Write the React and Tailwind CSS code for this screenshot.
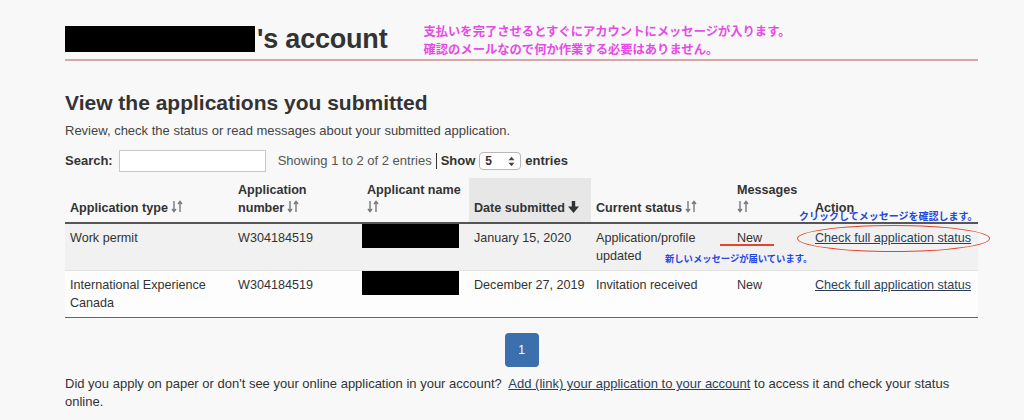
import React from 'react';

const SortIcon = () => (
  <svg width="12" height="13" viewBox="0 0 12 13" className="inline-block align-[-1px] ml-[3px]" fill="none" stroke="#7a7a7a" strokeWidth="1.4">
    <path d="M3 1v10.5M1 9l2 2.6L5 9" />
    <path d="M9 12V1.5M7 4l2-2.6L11 4" />
  </svg>
);

const DownArrow = () => (
  <svg width="11" height="12" viewBox="0 0 11 12" className="inline-block align-[-1px] ml-[3px]" fill="#333">
    <rect x="3.8" y="0" width="3.4" height="6.5" />
    <path d="M0 5.5h11L5.5 12z" />
  </svg>
);

const rows = [
  {
    type: 'Work permit',
    number: 'W304184519',
    date: 'January 15, 2020',
    status: 'Application/profile updated',
    messages: 'New',
    bg: 'bg-[#f1f1f1]',
  },
  {
    type: 'International Experience Canada',
    number: 'W304184519',
    date: 'December 27, 2019',
    status: 'Invitation received',
    messages: 'New',
    bg: 'bg-[#fdfdfd]',
  },
];

export default function App() {
  return (
    <div
      className="w-[1024px] h-[420px] overflow-hidden bg-[#f8f8f8] text-[#333]"
      style={{ fontFamily: '"Liberation Sans", Arial, sans-serif' }}
    >
      <div className="ml-[65px] w-[913px] relative">
        {/* page title */}
        <div className="h-[61px] border-b-[2px] border-[#d6a9a9] flex items-start pt-[26px]">
          <div className="w-[190px] h-[26px] bg-black" />
          <h1 className="ml-[2px] -mt-[2px] text-[27px] leading-[30px] font-bold tracking-[-0.2px]">'s account</h1>
          <div
            className="ml-[36px] -mt-[4px] text-[12.3px] leading-[18px] font-bold text-[#e64be6]"
            style={{ fontFamily: '"Noto Sans CJK JP", sans-serif' }}
          >
            <div>支払いを完了させるとすぐにアカウントにメッセージが入ります。</div>
            <div>確認のメールなので何か作業する必要はありません。</div>
          </div>
        </div>

        <h2 className="mt-[30px] text-[21px] leading-[24px] font-bold">View the applications you submitted</h2>
        <p className="mt-[7px] text-[13px] leading-[18px] text-[#444]">
          Review, check the status or read messages about your submitted application.
        </p>

        {/* search + entries */}
        <div className="mt-[10px] flex items-center h-[22px] text-[13px]">
          <span className="font-bold">Search:</span>
          <div className="ml-[6px] w-[147px] h-[22px] bg-white border border-[#c8c8c8]" />
          <span className="ml-[12px] text-[#555]">Showing 1 to 2 of 2 entries</span>
          <span className="ml-[4px] w-[1px] h-[16px] bg-[#333]" />
          <span className="ml-[4px] font-bold">Show</span>
          <div className="ml-[4px] w-[42px] h-[18px] rounded-[4px] border border-[#b8b8b8] bg-white flex items-center justify-between px-[5px]">
            <span className="font-bold text-[12px]">5</span>
            <svg width="7" height="11" viewBox="0 0 7 11" fill="#444">
              <path d="M0.5 4.3L3.5 0.8 6.5 4.3z" />
              <path d="M0.5 6.7L3.5 10.2 6.5 6.7z" />
            </svg>
          </div>
          <span className="ml-[4px] font-bold">entries</span>
        </div>

        {/* table */}
        <table className="mt-[6px] w-[913px] table-fixed border-collapse text-[12.6px] leading-[18px]">
          <colgroup>
            <col className="w-[168px]" />
            <col className="w-[129px]" />
            <col className="w-[107px]" />
            <col className="w-[122px]" />
            <col className="w-[141px]" />
            <col className="w-[78px]" />
            <col className="w-[168px]" />
          </colgroup>
          <thead>
            <tr className="border-b-[2px] border-[#555] h-[45px]">
              <th className="align-bottom text-left font-bold px-[5px] pb-[5px]">Application type<SortIcon /></th>
              <th className="align-bottom text-left font-bold px-[5px] pb-[5px]">Application<br />number<SortIcon /></th>
              <th className="align-bottom text-left font-bold px-[5px] pb-[5px]">Applicant name<br /><span className="-ml-[3px]"><SortIcon /></span></th>
              <th className="align-bottom text-left font-bold px-[5px] pb-[5px] bg-[#e7e7e7] whitespace-nowrap">Date submitted<DownArrow /></th>
              <th className="align-bottom text-left font-bold px-[5px] pb-[5px]">Current status<SortIcon /></th>
              <th className="align-bottom text-left font-bold px-[5px] pb-[5px]">Messages<br /><span className="-ml-[3px]"><SortIcon /></span></th>
              <th className="align-bottom text-left font-bold px-[5px] pb-[5px]">Action</th>
            </tr>
          </thead>
          <tbody>
            {rows.map((r, i) => (
              <tr key={i} className={`${r.bg} ${i === 0 ? 'border-b border-[#e2e2e2]' : 'border-b border-[#666]'} h-[46px]`}>
                <td className="align-top px-[5px] pt-[5px] pb-[5px]">{r.type}</td>
                <td className="align-top px-[5px] pt-[5px] pb-[5px]">{r.number}</td>
                <td className="align-top pt-[0px] pb-[5px]">
                  <div className="w-[97px] h-[25px] bg-black -mt-[1px]" />
                </td>
                <td className="align-top px-[5px] pt-[5px] pb-[5px] whitespace-nowrap">{r.date}</td>
                <td className="align-top px-[5px] pt-[5px] pb-[5px]">{r.status}</td>
                <td className="align-top px-[5px] pt-[5px] pb-[5px]">{r.messages}</td>
                <td className="align-top px-[5px] pt-[5px] pb-[5px] whitespace-nowrap">
                  <a href="#" className="underline text-[#2b3f5c]">Check full application status</a>
                </td>
              </tr>
            ))}
          </tbody>
        </table>

        {/* pagination */}
        <div className="mt-[15px] flex justify-center">
          <div className="w-[34px] h-[34px] rounded-[4px] bg-[#3c6fad] text-white text-[12px] flex items-center justify-center">1</div>
        </div>

        <p className="mt-[8px] text-[13px] leading-[18px] text-[#333]">
          Did you apply on paper or don't see your online application in your account?{'\u00a0 '}
          <a href="#" className="underline text-[#2b3f5c]">Add (link) your application to your account</a> to access it and check your status online.
        </p>

        {/* annotations */}
        <div
          className="absolute left-[734px] top-[210px] text-[10px] leading-[12px] font-bold text-[#2446e6] whitespace-nowrap"
          style={{ fontFamily: '"Noto Sans CJK JP", sans-serif' }}
        >
          クリックしてメッセージを確認します。
        </div>
        <div
          className="absolute left-[600px] top-[252px] text-[9.3px] leading-[12px] font-bold text-[#2446e6] whitespace-nowrap"
          style={{ fontFamily: '"Noto Sans CJK JP", sans-serif' }}
        >
          新しいメッセージが届いています。
        </div>
        <div className="absolute left-[655px] top-[244px] w-[54px] h-[2px] bg-[#e5452c]" />
        <div className="absolute left-[732px] top-[225px] w-[193px] h-[27px] rounded-[50%] border-[1.5px] border-[#e5452c]" />
      </div>
    </div>
  );
}
